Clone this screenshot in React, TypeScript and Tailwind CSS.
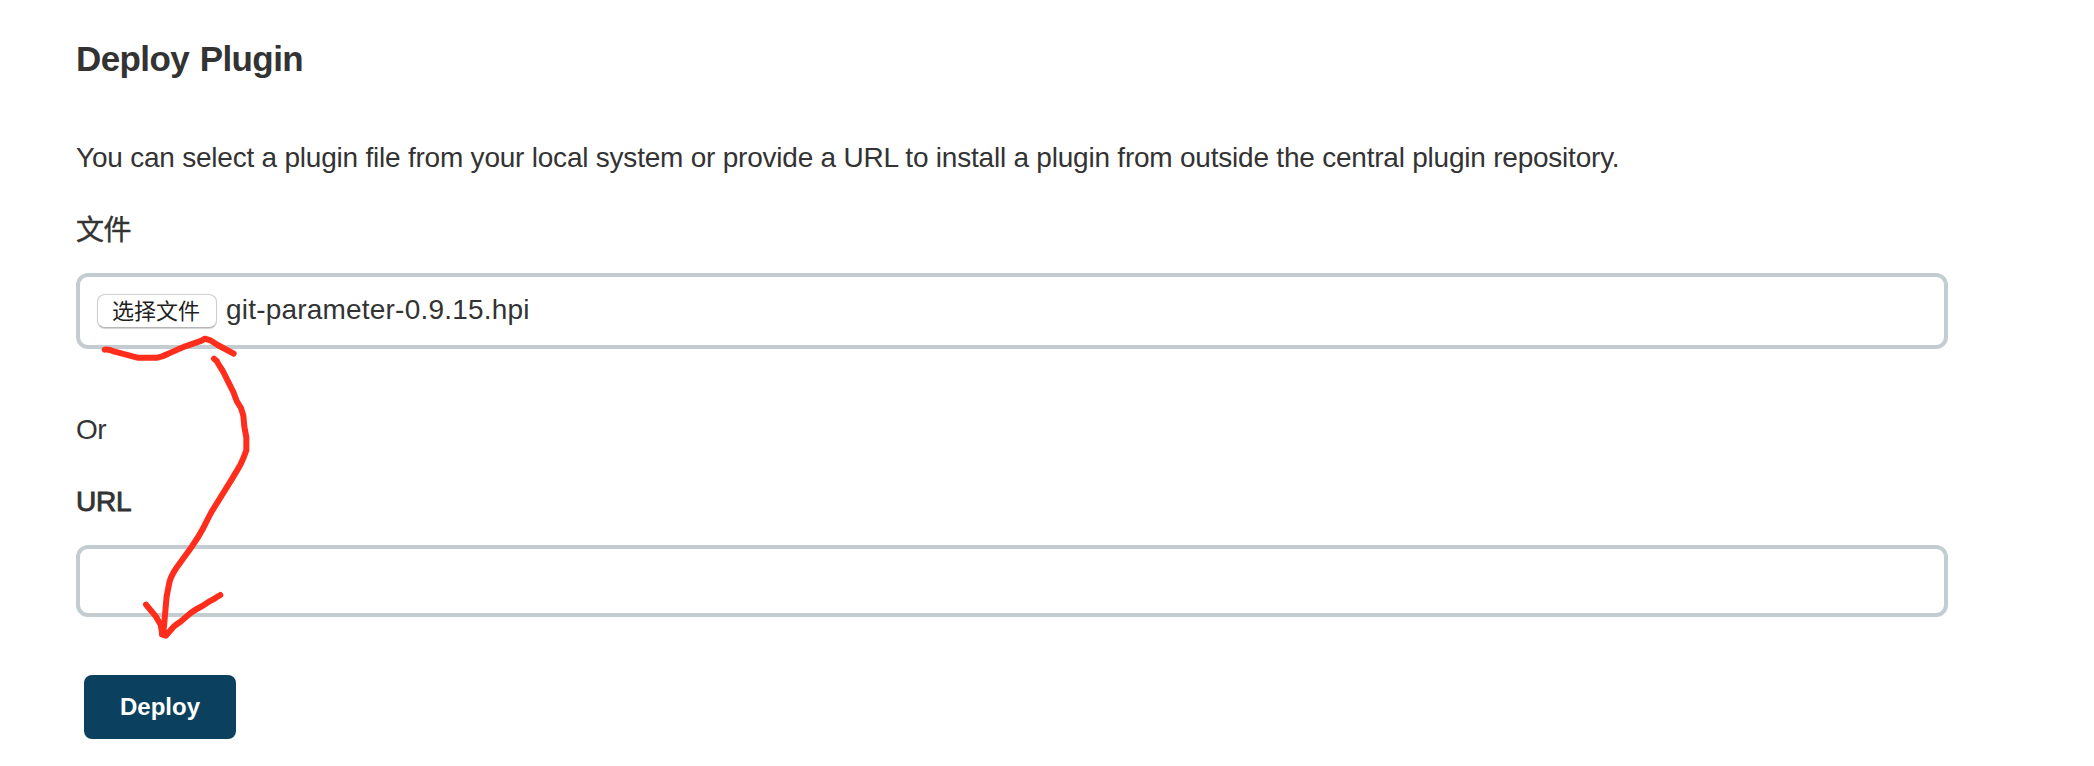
function HandDrawnArrow() {
  return (
    <svg
      className="pointer-events-none absolute top-[320px] left-[60px] h-[330px] w-[240px]"
      viewBox="0 0 720 990"
      fill="none"
      stroke="#ff2d1c"
      strokeWidth="18"
      strokeLinecap="round"
      strokeLinejoin="round"
    >
      <path d="M134 89Q145 87 164 95L235 113.500H290Q306 111 323 102C348 91 352 89 376 79L425 62L435 56L453 62L473 75L521 101" />
      <path d="M462 116L471 124C477 138 486 146 493 162L510 196L520 216L530 243L543 264L550 287L553 320L559 352V391C552 411 547 424 538 440L517 475L455 575C443 597 438 608 430 624C412 658 398 675 386 693L349 744C337 762 332 770 328 788L320 829L312 919L306 943" />
      <path d="M258 854L288 890L302 914L307 943L318 947L340 921Q350 912 363 904L392 879Q405 869 427 858L450 843Q460 839 469 832L481 825" />
      <path d="M306 925L318 940" />
    </svg>
  );
}

export default function App() {
  return (
    <main className="relative h-[766px] w-full overflow-hidden bg-white pt-[38px] pl-[76px] font-['Liberation_Sans','Noto_Sans_CJK_SC',sans-serif] text-[28px] leading-10 text-[#333333]">
      <h1 className="text-[35px] font-bold tracking-[-0.6px] leading-[42px] [word-spacing:1.5px]">Deploy Plugin</h1>
      <form className="mt-[58px] flex w-[1872px] flex-col items-start">
        <p className="whitespace-nowrap tracking-[-0.22px]">
          You can select a plugin file from your local system or provide a URL to install a plugin from
          outside the central plugin repository.
        </p>
        <label className="mt-[33px] tracking-[-0.5px] [-webkit-text-stroke:0.4px_#333333]">文件</label>
        <div className="mt-[22px] flex h-[76px] w-full items-center gap-[9px] rounded-[12px] border-4 border-[#c3ccd1] pl-[17px]">
          <button
            type="button"
            className="flex h-[34px] w-[120px] items-center justify-center rounded-[8px] border border-[#cfcfcf] border-b-[#b5b5b5] bg-white pt-[2px] pr-[2px] text-[22px] leading-none text-[#1f1f1f] shadow-[0_1px_1px_rgba(0,0,0,0.18)]"
          >
            选择文件
          </button>
          <span className="pb-0.5 tracking-[0.2px]">git-parameter-0.9.15.hpi</span>
        </div>
        <p className="mt-[61px] tracking-[-0.5px]">Or</p>
        <label htmlFor="url" className="mt-8 tracking-[-0.2px] [-webkit-text-stroke:0.9px_#333333]">
          URL
        </label>
        <input id="url" type="text" className="mt-[23px] h-[72px] w-full rounded-[12px] border-4 border-[#c3ccd1] px-4" />
        <button
          type="button"
          className="mt-[58px] ml-2 h-16 w-[152px] rounded-[8px] bg-[#0b405f] text-[24px] font-bold text-white"
        >
          Deploy
        </button>
      </form>
      <HandDrawnArrow />
    </main>
  );
}
